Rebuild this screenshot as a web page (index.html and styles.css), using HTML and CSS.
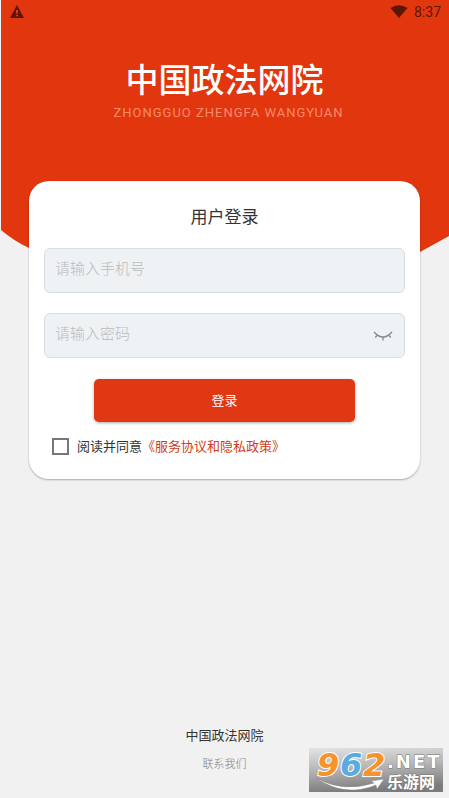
FILE: index.html
```html
<!DOCTYPE html>
<html lang="zh-CN">
<head>
<meta charset="utf-8">
<meta name="viewport" content="width=device-width, initial-scale=1">
<title>中国政法网院</title>
<link rel="stylesheet" href="styles.css">
</head>
<body>
<svg class="backdrop" viewBox="0 0 449 300" preserveAspectRatio="none" aria-hidden="true">
  <path fill="#e2360e" d="M1 0H449V236L420 252Q330 296 224 298Q110 290 29 248Q14 241 1 230Z"/>
</svg>
<div class="status">
  <svg width="14" height="13" viewBox="0 0 14 13" aria-hidden="true"><path fill="#5c1605" fill-rule="evenodd" d="M7 0L14 13H0ZM6 5V8.500H8V5ZM6 9.700V11.200H8V9.700Z"/></svg>
  <div class="status-right">
    <svg width="18" height="13" viewBox="0 0 18 13" aria-hidden="true"><path fill="#5c1605" d="M0.500 3Q9-2.500 17.500 3L9 13Z"/></svg>
    <span>8:37</span>
  </div>
</div>
<header class="brand">
  <h1>中国政法网院</h1>
  <p>ZHONGGUO ZHENGFA WANGYUAN</p>
</header>
<main class="card">
  <h2>用户登录</h2>
  <form>
    <div class="field">
      <input type="tel" placeholder="请输入手机号" aria-label="手机号">
    </div>
    <div class="field">
      <input type="password" placeholder="请输入密码" aria-label="密码">
      <button type="button" class="eye" aria-label="显示密码">
        <svg width="20" height="12" viewBox="0 0 20 12" fill="none" stroke="#85898c" stroke-width="1.300"><path d="M1 2Q10 12 19 2M4.300 5L2.300 7.500M10 7V10.500M15.700 5L17.700 7.500"/></svg>
      </button>
    </div>
    <button type="button" class="submit">登录</button>
    <div class="agree">
      <input type="checkbox" id="agree">
      <label for="agree">阅读并同意</label><a href="#">《服务协议和隐私政策》</a>
    </div>
  </form>
</main>
<footer class="footer">
  <strong>中国政法网院</strong>
  <a href="#">联系我们</a>
</footer>
<svg class="watermark" width="134" height="44" viewBox="0 0 134 44" role="img" aria-label="962.NET 乐游网">
  <defs>
    <linearGradient id="plate" x1="0" y1="0" x2="0.200" y2="1"><stop offset="0" stop-color="#e4e4e4"/><stop offset="0.500" stop-color="#b5b5b5"/><stop offset="1" stop-color="#7c7c7c"/></linearGradient>
  </defs>
  <rect width="134" height="44" fill="url(#plate)"/>
  <path d="M7 30Q34 45 65 35L62 33L75 31L68 41L67 37Q36 50 7 30Z" fill="#fff" stroke="#888" stroke-width="0.500"/>
  <g class="digits"><text x="8" y="28" fill="#f7932a">9</text><text x="31" y="28" fill="#58ace0">6</text><text x="54" y="28" fill="#f7932a">2</text></g>
  <text class="net" x="78" y="20">.NET</text>
  <text class="cn" x="78" y="40">乐游网</text>
</svg>
</body>
</html>
```
FILE: styles.css
```css
* {
  box-sizing: border-box;
}

body {
  margin: 0;
  min-height: 100vh;
  display: flex;
  flex-direction: column;
  position: relative;
  background: #f1f1f1;
  color: #333;
  font-family: "Noto Sans CJK SC", sans-serif;
}

h1, h2, p {
  margin: 0;
}

a {
  text-decoration: none;
}

.backdrop {
  position: absolute;
  top: 0;
  left: 0;
  z-index: -1;
  width: 100%;
  height: 300px;
}

.status {
  height: 24px;
  padding: 0 8px 0 10px;
  display: flex;
  justify-content: space-between;
  align-items: center;
  color: #5c1605;
  font: 400 14px/24px Roboto, sans-serif;
}

.status svg {
  display: block;
  margin-bottom: 2px;
}

.status-right {
  display: flex;
  align-items: center;
  gap: 6px;
}

.brand {
  height: 157px;
  padding-top: 34px;
  text-align: center;
}

.brand h1 {
  color: #fff;
  font-size: 33px;
  font-weight: 500;
  line-height: 40px;
}

.brand p {
  margin-top: 7px;
  padding-left: 8px;
  color: #f78a6c;
  font: 13px/16px Roboto, sans-serif;
  letter-spacing: 1px;
}

.card {
  margin: 0 29px;
  padding: 21px 15px 23px;
  border-radius: 20px;
  background: #fff;
  box-shadow: 0 1px 2px rgba(0, 0, 0, 0.3);
}

.card h2 {
  margin-bottom: 18px;
  font-size: 17px;
  font-weight: 400;
  line-height: 28px;
  text-align: center;
}

.field {
  height: 45px;
  margin-bottom: 20px;
  padding: 0 11px 0 10px;
  display: flex;
  align-items: center;
  border: 1px solid #d9dde0;
  border-radius: 6px;
  background: #eef2f5;
}

.field input {
  flex: 1;
  min-width: 0;
  height: 40px;
  padding: 0 0 6px;
  border: 0;
  outline: 0;
  background: none;
  font: 300 15px/24px "Noto Sans CJK SC", sans-serif;
}

.field input::placeholder {
  color: #b9bbbd;
}

.eye {
  padding: 0;
  border: 0;
  background: none;
  line-height: 0;
}

.submit {
  display: block;
  width: calc(100% - 100px);
  height: 43px;
  margin: 21px auto 14px;
  padding: 0 0 2px;
  border: 0;
  border-radius: 5px;
  background: #e13814;
  color: #fff;
  box-shadow: 0 1px 3px rgba(0, 0, 0, 0.35);
  font: 400 13px/20px "Noto Sans CJK SC", sans-serif;
}

.agree {
  padding-left: 8px;
  display: flex;
  align-items: center;
  font-size: 13px;
  line-height: 20px;
}

.agree input {
  appearance: none;
  width: 17px;
  height: 17px;
  margin: 0 8px 0 0;
  border: 2px solid #777;
  background: #fff;
}

.agree a {
  color: #cf3d20;
}

.footer {
  margin-top: auto;
  padding-bottom: 25px;
  display: flex;
  flex-direction: column;
  align-items: center;
  gap: 8px;
}

.footer strong {
  font-size: 13px;
  font-weight: 400;
  line-height: 20px;
}

.footer a {
  color: #808080;
  font-size: 11px;
  font-weight: 300;
  line-height: 20px;
}

.watermark {
  position: absolute;
  right: 6px;
  bottom: 6px;
  overflow: visible;
}

.digits {
  font: italic 700 32px "DejaVu Sans", sans-serif;
  stroke: #fff;
  stroke-width: 2px;
  paint-order: stroke;
}

.net,
.cn {
  fill: #fff;
  stroke: #777;
  stroke-width: 1px;
  paint-order: stroke;
}

.net {
  font: 700 18px "DejaVu Sans", sans-serif;
  letter-spacing: 2px;
}

.cn {
  font: 700 16px "Noto Sans CJK SC", sans-serif;
}
```
